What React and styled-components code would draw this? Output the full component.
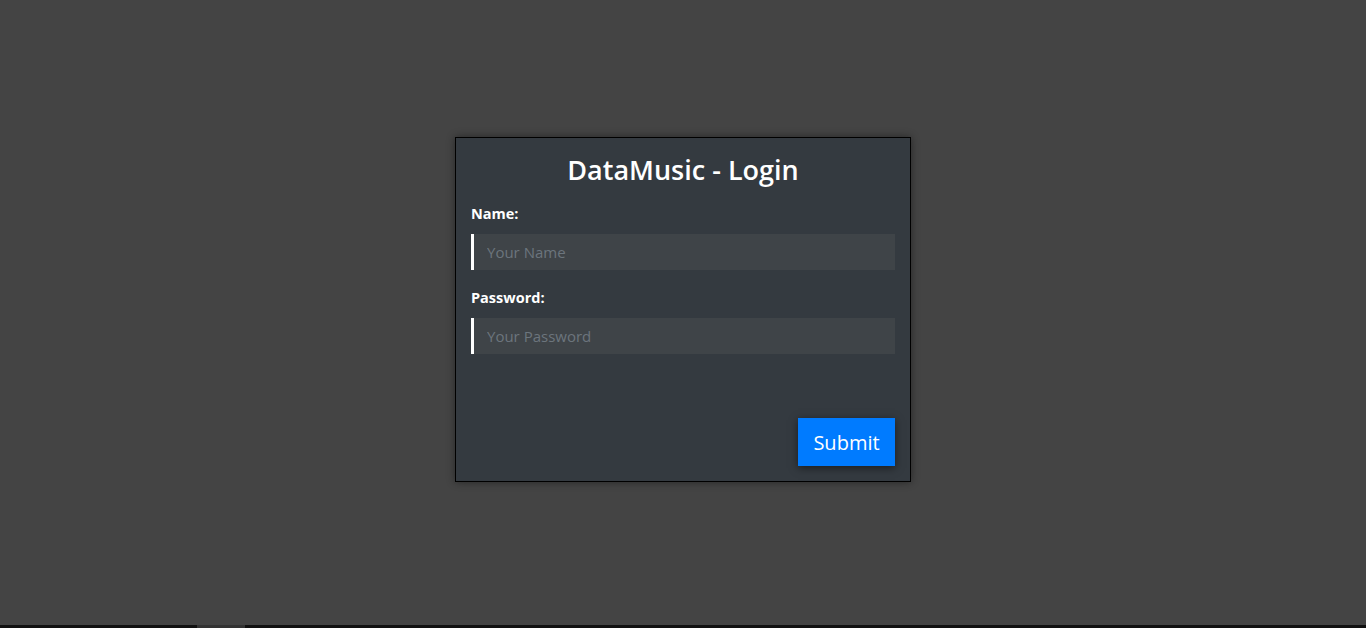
import React from "react";
import styled, { createGlobalStyle } from "styled-components";

const GlobalStyle = createGlobalStyle`
  html, body {
    margin: 0;
    padding: 0;
    background: #444444;
    font-family: "Open Sans", "Noto Sans", sans-serif;
  }
  * { box-sizing: border-box; }
`;

const Page = styled.div`
  height: 100vh;
  display: flex;
  flex-direction: column;
`;

const Main = styled.main`
  flex: 1;
  display: flex;
  align-items: center;
  justify-content: center;
`;

const Card = styled.form`
  width: 456px;
  height: 345px;
  background: #343a40;
  border: 1px solid #000;
  box-shadow: 0 0 8px rgba(0, 0, 0, 0.45);
  padding: 15px;
  display: flex;
  flex-direction: column;
  margin-top: -6px;
`;

const Title = styled.h2`
  margin: 1px 0 18px;
  color: #fff;
  text-align: center;
  font-size: 27px;
  font-weight: 600;
  line-height: 32px;
`;

const Field = styled.div`
  display: flex;
  flex-direction: column;
  margin-bottom: 18px;
`;

const Label = styled.label`
  color: #fff;
  font-size: 14.5px;
  font-weight: 700;
  line-height: 20px;
  margin-bottom: 10px;
`;

const Input = styled.input`
  height: 36px;
  background: #3f4448;
  border: none;
  border-left: 3px solid #fff;
  padding: 0 13px;
  font-family: inherit;
  font-size: 15px;
  color: #fff;
  outline: none;
  &::placeholder { color: #6c757d; }
`;

const Actions = styled.div`
  margin-top: auto;
  display: flex;
  justify-content: flex-end;
`;

const Button = styled.button`
  width: 97px;
  height: 48px;
  background: #007bff;
  border: none;
  color: #fff;
  font-family: inherit;
  font-size: 20px;
  box-shadow: 0 2px 8px rgba(0, 0, 0, 0.5);
  cursor: pointer;
`;

const ScrollBar = styled.div`
  height: 3px;
  background: #111;
  display: flex;
`;

const Thumb = styled.div`
  margin-left: 197px;
  width: 48px;
  background: #333;
`;

export default function App() {
  return (
    <Page>
      <GlobalStyle />
      <Main>
        <Card onSubmit={(e) => e.preventDefault()}>
          <Title>DataMusic - Login</Title>
          <Field>
            <Label>Name:</Label>
            <Input placeholder="Your Name" />
          </Field>
          <Field>
            <Label>Password:</Label>
            <Input type="password" placeholder="Your Password" />
          </Field>
          <Actions>
            <Button type="submit">Submit</Button>
          </Actions>
        </Card>
      </Main>
      <ScrollBar>
        <Thumb />
      </ScrollBar>
    </Page>
  );
}
